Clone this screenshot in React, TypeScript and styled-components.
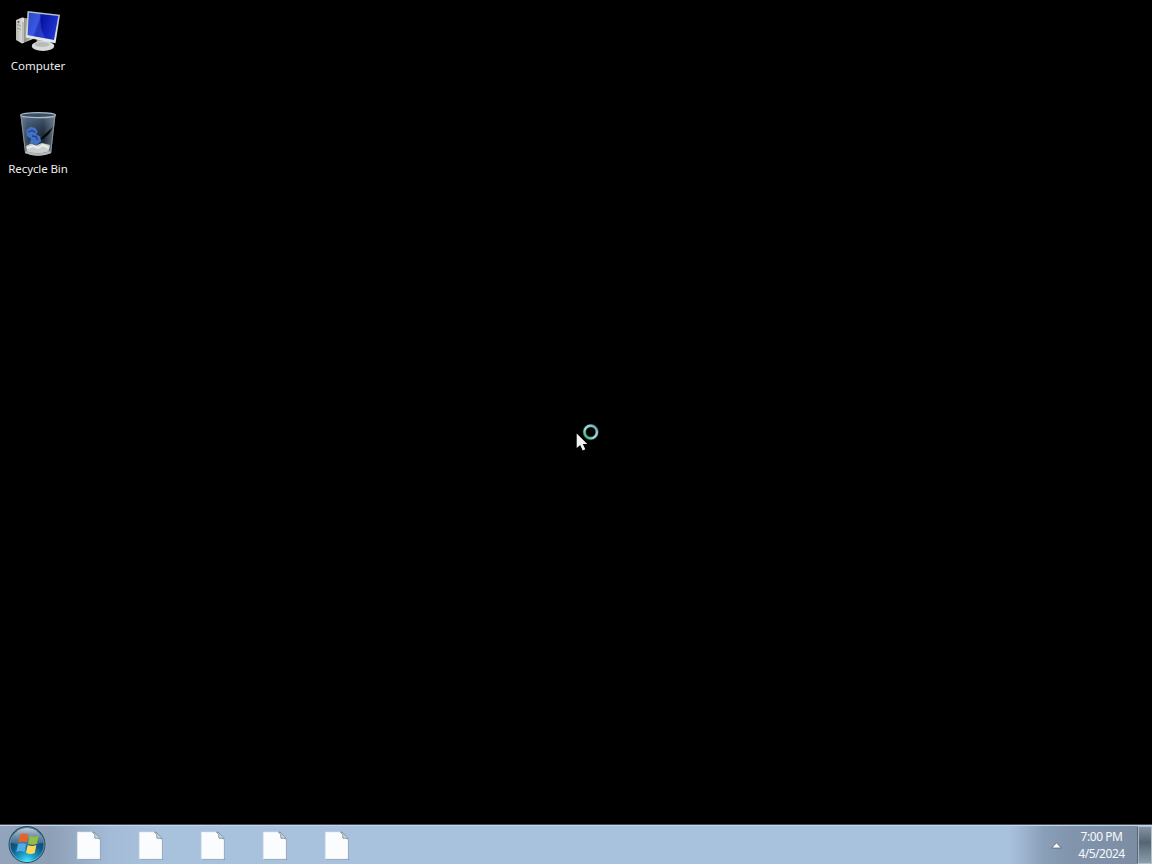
import React from 'react';
import styled, { createGlobalStyle } from 'styled-components';

const GlobalStyle = createGlobalStyle`
  * { box-sizing: border-box; }
  body { margin: 0; background: #000; overflow: hidden; }
`;

const Screen = styled.div`
  position: relative;
  width: 1152px;
  height: 864px;
  display: flex;
  flex-direction: column;
  background: #000;
  overflow: hidden;
  font-family: 'Noto Sans', 'Open Sans', sans-serif;
`;

const Desktop = styled.main`
  flex: 1;
  display: flex;
  flex-direction: column;
  align-items: flex-start;
  gap: 29px;
  padding-top: 6px;
`;

const Shortcut = styled.div`
  width: 76px;
  height: 74px;
  display: flex;
  flex-direction: column;
  align-items: center;
`;

const ShortcutIcon = styled.svg`
  display: block;
  flex: none;
  width: 48px;
  height: 50px;
`;

const ShortcutLabel = styled.span<{ $spacing: number }>`
  margin-top: 2px;
  font-size: 11.5px;
  line-height: 16px;
  letter-spacing: ${(p) => p.$spacing}px;
  white-space: nowrap;
  color: #ececec;
`;

const Pointer = styled.svg`
  position: absolute;
  left: 572px;
  top: 420px;
  width: 30px;
  height: 34px;
`;

const Taskbar = styled.footer`
  flex: none;
  height: 40px;
  display: flex;
  align-items: stretch;
  border-top: 1px solid #46505c;
  box-shadow: inset 0 1px 0 #c7d6e5;
  background: linear-gradient(90deg, #93a5bc 0, #8e9fb5 50px, #97acc6 78px, #a3bbd7 110px, #a8c1dd 160px,
    #a8c1dd 1010px, #9db4ce 1024px, #899eb8 1044px, #8194ac 1072px, #7c8da3 1137px);
`;

const StartButton = styled.div`
  width: 54px;
  display: flex;
  justify-content: center;
  svg { display: block; width: 40px; height: 39px; }
`;

const Pinned = styled.div`
  display: flex;
  flex: 1;
  padding-left: 4px;
`;

const PinnedItem = styled.div`
  width: 62px;
  display: flex;
  justify-content: center;
  padding-top: 6px;
  svg { display: block; width: 26px; height: 30px; }
`;

const Tray = styled.div`
  display: flex;
  align-items: stretch;
`;

const TrayArrow = styled.div`
  width: 22px;
  display: flex;
  align-items: center;
  justify-content: center;
  svg { display: block; width: 11px; height: 7px; margin-top: 2px; }
`;

const Clock = styled.div`
  width: 70px;
  padding: 3px 1px 0 0;
  text-align: center;
  font-size: 12px;
  line-height: 17px;
  letter-spacing: -0.45px;
  color: #f7fafd;
  white-space: nowrap;
`;

const ShowDesktop = styled.div`
  width: 15px;
  margin-top: 1px;
  border: 1px solid #b0bfcc;
  border-left-color: #56687a;
  box-shadow: inset 1px 0 0 #a3b4c4;
  background: linear-gradient(180deg, #8392a1 0%, #687582 28%, #566574 43%, #6f808f 70%, #8c9ca9 100%);
`;

const ComputerIcon = () => (
  <ShortcutIcon viewBox="0 0 48 50">
    <defs>
      <linearGradient id="screen" x1="0" y1="0" x2="1" y2="0.3">
        <stop offset="0" stopColor="#1428a4" />
        <stop offset="0.38" stopColor="#2442e0" />
        <stop offset="0.46" stopColor="#0612a0" />
        <stop offset="1" stopColor="#1f31cf" />
      </linearGradient>
      <linearGradient id="metal" x1="0" y1="0" x2="0" y2="1">
        <stop offset="0" stopColor="#aebbc0" />
        <stop offset="1" stopColor="#eceeea" />
      </linearGradient>
      <linearGradient id="tower">
        <stop offset="0" stopColor="#b7b9b5" />
        <stop offset="0.45" stopColor="#e2e3df" />
        <stop offset="0.5" stopColor="#94968f" />
        <stop offset="1" stopColor="#d5d7d2" />
      </linearGradient>
    </defs>
    <path d="M2 14 8 11.5 17 13 19 33 8 37.5 2 34Z" fill="url(#tower)" />
    <path d="M3 18.5 7 20M3 22 7 23.5M9 16v20M11 34l7-3" stroke="#888b86" strokeWidth=".8" />
    <circle cx="4.5" cy="16" r="1" fill="#555b54" />
    <path d="M23 33h10l1 5H22Z" fill="#a9adab" />
    <ellipse cx="29" cy="40" rx="11.3" ry="5" fill="#d8dbd9" />
    <ellipse cx="28" cy="38.5" rx="7.5" ry="2.4" fill="#b7bcb9" />
    <path d="M13.5 5 46 8.8 41.5 37.3 11.8 31.5Z" fill="url(#metal)" />
    <path d="M15 6.8 44.3 10 40 34 13.6 29Z" fill="url(#screen)" />
    <path d="M15.2 7 26 8.2 27 22 31 32 13.8 28.7Z" fill="#7092ff" opacity=".28" />
  </ShortcutIcon>
);

const RecycleIcon = () => (
  <ShortcutIcon viewBox="0 0 48 50">
    <defs>
      <linearGradient id="glass">
        <stop offset="0" stopColor="#71828e" />
        <stop offset=".2" stopColor="#344a61" />
        <stop offset=".65" stopColor="#172433" />
        <stop offset="1" stopColor="#778792" />
      </linearGradient>
      <linearGradient id="shade" x1="0" y1="0" x2="0" y2="1">
        <stop offset="0" stopColor="#6e87a3" stopOpacity=".6" />
        <stop offset=".6" stopColor="#2c3744" stopOpacity=".15" />
        <stop offset="1" stopColor="#abb4b6" stopOpacity=".8" />
      </linearGradient>
    </defs>
    <path d="M6.5 6.5Q24 1.5 41.5 6.5L37 44Q24 50 11.2 44Z" fill="url(#glass)" />
    <path d="M6.5 6.5H41.5L37 44Q24 50 11.2 44Z" fill="url(#shade)" />
    <path d="M39 18 35 25 29 30 24 32 30 26Z" fill="#05080b" />
    <path d="m12.5 21 4-3.2 5 1.2 2.2 4-1.6 2.4 4 1.8 1 5-5 4-6-2.5 1-4.2-4.4-2.6Z" fill="#4371c6" />
    <path d="m14 23 4-1.6 3.4 2M18 27l4 .6 1.5 3.6" fill="none" stroke="#223f8c" strokeWidth="1.3" />
    <path d="M12 37 17 34.5 22 36.5 28 34 36 36 34.5 42.5Q24 46 13 42.5Z" fill="#c9cdcc" />
    <path d="m13 39 6-2 5 2 5-3 6 3" fill="none" stroke="#ebecea" strokeWidth="2" />
    <path d="M11.3 43Q24 48 37 43" fill="none" stroke="#b3b8b9" strokeWidth="2.2" />
    <path d="m7.2 8 4.2 35M40.7 8l-3.9 35" fill="none" stroke="#889299" strokeWidth="1" />
    <ellipse cx="24" cy="6.2" rx="17.4" ry="2.5" fill="#384f68" stroke="#aeb9c1" strokeWidth="1.2" />
  </ShortcutIcon>
);

const FileIcon = () => (
  <svg viewBox="0 0 26 30">
    <path d="M2 2h17l6 7v20H2Z" fill="#71879b" opacity=".75" />
    <path d="M1.3 1H18l6 6.4V28H1.3Z" fill="#fbfcfd" stroke="#dbe3e9" strokeWidth=".6" />
    <path d="M16.5 1H18l6 6.4V8Q20.5 6.5 19 7.3 19.5 3 16.5 1Z" fill="#cfdce4" stroke="#6d808f" strokeWidth=".8" />
  </svg>
);

const StartOrb = () => (
  <svg viewBox="0 0 40 39">
    <defs>
      <radialGradient id="orb" cx=".5" cy=".98" r=".95">
        <stop offset="0" stopColor="#4ceaff" />
        <stop offset=".25" stopColor="#1a9fc9" />
        <stop offset=".55" stopColor="#125783" />
        <stop offset="1" stopColor="#183858" />
      </radialGradient>
      <linearGradient id="gloss" x1="0" y1="0" x2="0" y2="1">
        <stop offset="0" stopColor="#dce6ed" stopOpacity=".85" />
        <stop offset="1" stopColor="#7f9bb3" stopOpacity=".35" />
      </linearGradient>
    </defs>
    <circle cx="20" cy="19.5" r="18" fill="url(#orb)" stroke="#294d6d" strokeWidth="1" />
    <path d="M3.2 17.5A17 17 0 0 1 36.8 17.5Q20 22.5 3.2 17.5Z" fill="url(#gloss)" />
    <circle cx="20" cy="19.5" r="17" fill="none" stroke="#a2d5e3" strokeWidth=".7" opacity=".7" />
    <path d="M13.2 9.8Q17 7.4 21.4 9.8L19.7 17.6Q15.4 15.5 11.4 17.6Z" fill="#e66327" />
    <path d="M22.8 10.7Q27 12.8 31.6 10.4L29.8 18.7Q25.6 20.8 21 18.4Z" fill="#93bd43" />
    <path d="M11 19.1Q15 17.1 19.3 19.3L17.6 27Q13.3 24.8 9.2 27Z" fill="#51ace4" />
    <path d="M20.7 20Q25 22.2 29.4 20L27.7 28Q23.4 30.2 19 27.8Z" fill="#ffd65c" />
  </svg>
);

export default function App() {
  return (
    <Screen>
      <GlobalStyle />
      <Desktop>
        <Shortcut>
          <ComputerIcon />
          <ShortcutLabel $spacing={0}>Computer</ShortcutLabel>
        </Shortcut>
        <Shortcut>
          <RecycleIcon />
          <ShortcutLabel $spacing={-0.1}>Recycle Bin</ShortcutLabel>
        </Shortcut>
      </Desktop>
      <Taskbar>
        <StartButton><StartOrb /></StartButton>
        <Pinned>
          {[0, 1, 2, 3, 4].map((n) => (
            <PinnedItem key={n}><FileIcon /></PinnedItem>
          ))}
        </Pinned>
        <Tray>
          <TrayArrow>
            <svg viewBox="0 0 11 7"><path d="M5.5 .8 10.3 6H.7Z" fill="#fff" stroke="#46566b" strokeWidth=".7" /></svg>
          </TrayArrow>
          <Clock>
            <div>7:00 PM</div>
            <div>4/5/2024</div>
          </Clock>
          <ShowDesktop />
        </Tray>
      </Taskbar>
      <Pointer viewBox="0 0 30 34">
        <defs>
          <linearGradient id="ring" x1="0" y1="1" x2="1" y2="0">
            <stop offset="0" stopColor="#319b80" />
            <stop offset=".4" stopColor="#a5dec5" />
            <stop offset=".7" stopColor="#b7c3e0" />
            <stop offset="1" stopColor="#438f92" />
          </linearGradient>
        </defs>
        <circle cx="18.7" cy="12" r="6.3" fill="none" stroke="#16554d" strokeWidth="3.4" />
        <circle cx="18.7" cy="12" r="6.3" fill="none" stroke="url(#ring)" strokeWidth="2.2" />
        <path d="M4.7 13.5V28L8.2 25l2.5 5.5 2.6-1.2-2.5-5.2h4.5Z" fill="#f1f3f2" />
      </Pointer>
    </Screen>
  );
}
